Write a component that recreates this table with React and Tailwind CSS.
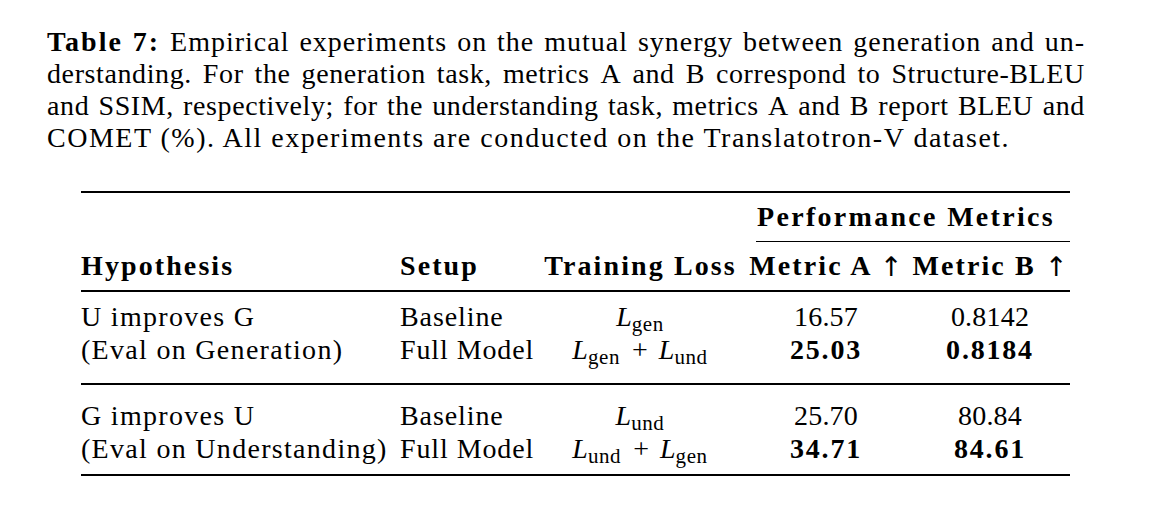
import React from "react";

const L = ({ sub }) => (
  <span className="whitespace-nowrap tracking-normal">
    <span className="italic">L</span>
    <span className="text-[21px] relative top-[5px] tracking-[0.6px] pr-[1px]">{sub}</span>
  </span>
);

const Plus = () => <span className="mx-[11px]">+</span>;

const Arrow = () => (
  <span className="font-['DejaVu_Sans',sans-serif] font-normal text-[27px] tracking-normal relative top-[1px]">↑</span>
);

const JLine = ({ children, className = "" }) => (
  <div className={"flex justify-between whitespace-nowrap gap-x-[6px] " + className}>
    {children}
  </div>
);

const words = (s) => s.split(" ").map((w, i) => <span key={i}>{w}</span>);

const Row = ({ hyp, setup, loss, a, b, bold }) => (
  <div className="grid grid-cols-[313px_145px_203px_168px_160px] h-[33px] items-center">
    <div className="whitespace-nowrap tracking-[1.3px]">{hyp}</div>
    <div className="pl-[6px] whitespace-nowrap tracking-[0.9px]">{setup}</div>
    <div className="text-center whitespace-nowrap">{loss}</div>
    <div className={"text-center " + (bold ? "font-bold tracking-[1.8px]" : "tracking-[0.2px]")}>{a}</div>
    <div className={"text-center " + (bold ? "font-bold tracking-[1.8px]" : "tracking-[0.2px]")}>{b}</div>
  </div>
);

export default function App() {
  return (
    <div className="w-[1158px] h-[510px] bg-white text-black font-['Liberation_Serif',serif] text-[28px] overflow-hidden">
      <div className="ml-[47px] pt-[26px] w-[1038px] leading-[32px]">
        <JLine className="tracking-[1px]">
          <span className="font-bold tracking-[2px]">Table</span>
          <span className="font-bold tracking-[2px]">7:</span>
          {words("Empirical experiments on the mutual synergy between generation and un-")}
        </JLine>
        <JLine className="tracking-[0.6px]">
          {words("derstanding. For the generation task, metrics A and B correspond to Structure-BLEU")}
        </JLine>
        <JLine className="tracking-[0.6px]">
          {words("and SSIM, respectively; for the understanding task, metrics A and B report BLEU and")}
        </JLine>
        <div className="whitespace-nowrap tracking-[1.5px]">
          COMET (%). All experiments are conducted on the Translatotron-V dataset.
        </div>
      </div>

      <div className="ml-[81px] mt-[37px] w-[989px]">
        <div className="h-[2px] bg-black" />
        <div className="grid grid-cols-[313px_145px_203px_328px] h-[48px] items-center font-bold">
          <div />
          <div />
          <div />
          <div className="text-center whitespace-nowrap tracking-[2.3px]">Performance Metrics</div>
        </div>
        <div className="ml-[675px] h-[1px] bg-black" />
        <div className="grid grid-cols-[313px_145px_203px_168px_160px] h-[48px] items-center font-bold whitespace-nowrap tracking-[2.1px]">
          <div>Hypothesis</div>
          <div className="pl-[6px]">Setup</div>
          <div className="text-center">Training Loss</div>
          <div className="text-center">Metric A <Arrow /></div>
          <div className="text-center">Metric B <Arrow /></div>
        </div>
        <div className="h-[2px] bg-black" />
        <div className="pt-[4px] pb-[21px]">
          <Row hyp="U improves G" setup="Baseline" loss={<L sub="gen" />} a="16.57" b="0.8142" />
          <Row
            hyp="(Eval on Generation)"
            setup="Full Model"
            loss={<span className="whitespace-nowrap"><L sub="gen" /><Plus /><L sub="und" /></span>}
            a="25.03"
            b="0.8184"
            bold
          />
        </div>
        <div className="h-[2px] bg-black" />
        <div className="pt-[10px] pb-[13px]">
          <Row hyp="G improves U" setup="Baseline" loss={<L sub="und" />} a="25.70" b="80.84" />
          <Row
            hyp="(Eval on Understanding)"
            setup="Full Model"
            loss={<span className="whitespace-nowrap"><L sub="und" /><Plus /><L sub="gen" /></span>}
            a="34.71"
            b="84.61"
            bold
          />
        </div>
        <div className="h-[2px] bg-black" />
      </div>
    </div>
  );
}
